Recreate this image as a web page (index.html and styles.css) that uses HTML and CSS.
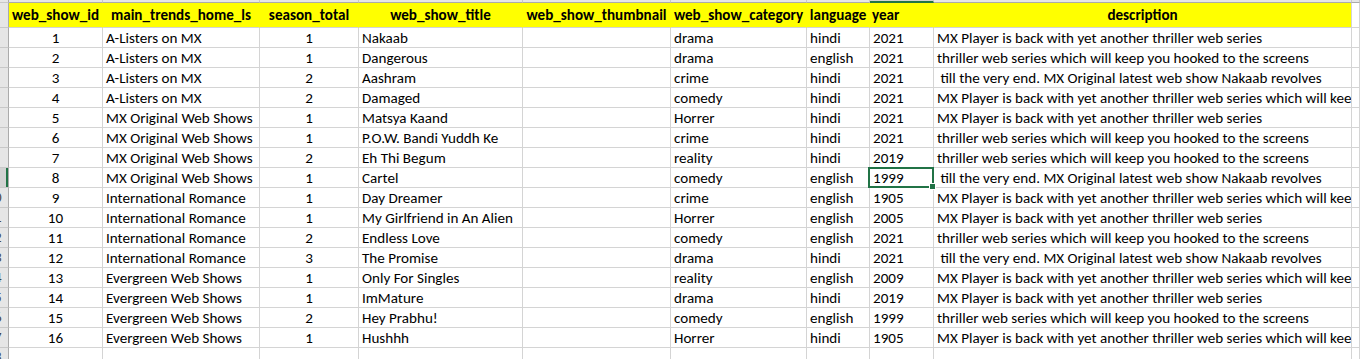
FILE: index.html
```html
<!DOCTYPE html>
<html lang="en">

<head>
    <meta charset="UTF-8">
    <title>web_show sheet</title>
    <link rel="stylesheet" href="styles.css">
</head>

<body>
    <div class="sheet">
        <!-- column letters strip (scrolled, only its bottom edge shows) -->
        <div class="row colhead">
            <div class="rh"></div><div></div><div></div><div></div><div></div><div></div><div></div><div></div><div class="on"></div><div></div><div></div>
        </div>
        <div class="row head">
            <div class="rh"><span>1</span></div>
            <div class="hc">web_show_id</div>
            <div class="hc">main_trends_home_ls</div>
            <div class="hc">season_total</div>
            <div class="hc">web_show_title</div>
            <div class="hc">web_show_thumbnail</div>
            <div class="hc">web_show_category</div>
            <div class="hc">language</div>
            <div class="hc left">year</div>
            <div class="hc last">description</div>
            <div></div>
        </div>
        <div class="row"><div class="rh"><span>2</span></div><div class="c">1</div><div>A-Listers on MX</div><div class="c">1</div><div>Nakaab</div><div></div><div>drama</div><div>hindi</div><div>2021</div><div>MX Player is back with yet another thriller web series</div><div></div></div>
        <div class="row"><div class="rh"><span>3</span></div><div class="c">2</div><div>A-Listers on MX</div><div class="c">1</div><div>Dangerous</div><div></div><div>drama</div><div>english</div><div>2021</div><div>thriller web series which will keep you hooked to the screens</div><div></div></div>
        <div class="row"><div class="rh"><span>4</span></div><div class="c">3</div><div>A-Listers on MX</div><div class="c">2</div><div>Aashram</div><div></div><div>crime</div><div>hindi</div><div>2021</div><div> till the very end. MX Original latest web show Nakaab revolves</div><div></div></div>
        <div class="row"><div class="rh"><span>5</span></div><div class="c">4</div><div>A-Listers on MX</div><div class="c">2</div><div>Damaged</div><div></div><div>comedy</div><div>hindi</div><div>2021</div><div>MX Player is back with yet another thriller web series which will keep you hooked to the screens</div><div></div></div>
        <div class="row"><div class="rh"><span>6</span></div><div class="c">5</div><div>MX Original Web Shows</div><div class="c">1</div><div>Matsya Kaand</div><div></div><div>Horrer</div><div>hindi</div><div>2021</div><div>MX Player is back with yet another thriller web series</div><div></div></div>
        <div class="row"><div class="rh"><span>7</span></div><div class="c">6</div><div>MX Original Web Shows</div><div class="c">1</div><div>P.O.W. Bandi Yuddh Ke</div><div></div><div>crime</div><div>hindi</div><div>2021</div><div>thriller web series which will keep you hooked to the screens</div><div></div></div>
        <div class="row"><div class="rh"><span>8</span></div><div class="c">7</div><div>MX Original Web Shows</div><div class="c">2</div><div>Eh Thi Begum</div><div></div><div>reality</div><div>hindi</div><div>2019</div><div>thriller web series which will keep you hooked to the screens</div><div></div></div>
        <div class="row"><div class="rh cur"><span>9</span></div><div class="c">8</div><div>MX Original Web Shows</div><div class="c">1</div><div>Cartel</div><div></div><div>comedy</div><div>english</div><div class="sel">1999</div><div> till the very end. MX Original latest web show Nakaab revolves</div><div></div></div>
        <div class="row"><div class="rh"><span>10</span></div><div class="c">9</div><div>International Romance</div><div class="c">1</div><div>Day Dreamer</div><div></div><div>crime</div><div>english</div><div>1905</div><div>MX Player is back with yet another thriller web series which will keep you hooked to the screens</div><div></div></div>
        <div class="row"><div class="rh"><span>11</span></div><div class="c">10</div><div>International Romance</div><div class="c">1</div><div>My Girlfriend in An Alien</div><div></div><div>Horrer</div><div>english</div><div>2005</div><div>MX Player is back with yet another thriller web series</div><div></div></div>
        <div class="row"><div class="rh"><span>12</span></div><div class="c">11</div><div>International Romance</div><div class="c">2</div><div>Endless Love</div><div></div><div>comedy</div><div>english</div><div>2021</div><div>thriller web series which will keep you hooked to the screens</div><div></div></div>
        <div class="row"><div class="rh"><span>13</span></div><div class="c">12</div><div>International Romance</div><div class="c">3</div><div>The Promise</div><div></div><div>drama</div><div>hindi</div><div>2021</div><div> till the very end. MX Original latest web show Nakaab revolves</div><div></div></div>
        <div class="row"><div class="rh"><span>14</span></div><div class="c">13</div><div>Evergreen Web Shows</div><div class="c">1</div><div>Only For Singles</div><div></div><div>reality</div><div>english</div><div>2009</div><div>MX Player is back with yet another thriller web series which will keep you hooked to the screens</div><div></div></div>
        <div class="row"><div class="rh"><span>15</span></div><div class="c">14</div><div>Evergreen Web Shows</div><div class="c">1</div><div>ImMature</div><div></div><div>drama</div><div>hindi</div><div>2019</div><div>MX Player is back with yet another thriller web series</div><div></div></div>
        <div class="row"><div class="rh"><span>16</span></div><div class="c">15</div><div>Evergreen Web Shows</div><div class="c">2</div><div>Hey Prabhu!</div><div></div><div>comedy</div><div>english</div><div>1999</div><div>thriller web series which will keep you hooked to the screens</div><div></div></div>
        <div class="row"><div class="rh"><span>17</span></div><div class="c">16</div><div>Evergreen Web Shows</div><div class="c">1</div><div>Hushhh</div><div></div><div>Horrer</div><div>hindi</div><div>1905</div><div>MX Player is back with yet another thriller web series which will keep you hooked to the screens</div><div></div></div>
        <div class="row"><div class="rh"><span>18</span></div><div></div><div></div><div></div><div></div><div></div><div></div><div></div><div></div><div></div><div></div></div>
    </div>
</body>

</html>
```

FILE: styles.css
```css
* {
    margin: 0;
    padding: 0;
    box-sizing: border-box;
}

body {
    font-family: Calibri, Lato, "Liberation Sans", sans-serif;
    font-size: 15.1px;
    color: #000;
    background: #fff;
    overflow: hidden;
}

.row {
    display: grid;
    grid-template-columns: 9px 94px 157px 99px 164px 148px 136px 63px 64px 418px 1fr;
    height: 20px;
}

.row > div {
    display: flex;
    align-items: flex-end;
    padding: 0 3px;
    line-height: 18px;
    white-space: pre;
    overflow: hidden;
    border-right: 1px solid #d4d4d4;
    border-bottom: 1px solid #d4d4d4;
}

.row > .c {
    justify-content: center;
}

/* row numbers, mostly scrolled out of view */
.row > .rh {
    justify-content: flex-end;
    padding: 0;
    background: #e6e6e6;
    color: #444;
    font-size: 14px;
    border-right-color: #ababab;
    border-bottom-color: #c8c8c8;
}

.rh span {
    flex: none;
    width: 27px;
    text-align: center;
}

.row > .rh.cur {
    background: #d2d2d2;
    box-shadow: inset -2px 0 #217346;
}

.colhead {
    height: 3px;
}

.colhead > div {
    background: #e6e6e6;
    border-right-color: #c8c8c8;
    border-bottom-color: #ababab;
}

.colhead > div.on {
    background: #d2d2d2;
    border-bottom: 2px solid #217346;
}

.head {
    height: 25px;
}

.row > .hc {
    align-items: center;
    justify-content: center;
    padding: 0 2px;
    font-weight: bold;
    background: #ff0;
    border-right-color: #ff0;
}

.row > .hc.left {
    justify-content: flex-start;
}

.row > .hc.last {
    border-right-color: #d4d4d4;
}

.head > .rh {
    align-items: center;
}

/* active cell */
.row > .sel {
    position: relative;
    overflow: visible;
    z-index: 1;
}

.sel::after {
    content: "";
    position: absolute;
    top: -1px;
    left: -2px;
    right: -1px;
    bottom: -1px;
    border: 2px solid #217346;
}

.sel::before {
    content: "";
    position: absolute;
    right: -3px;
    bottom: -3px;
    width: 5px;
    height: 5px;
    background: #217346;
    border: 1px solid #fff;
    z-index: 2;
}
```
